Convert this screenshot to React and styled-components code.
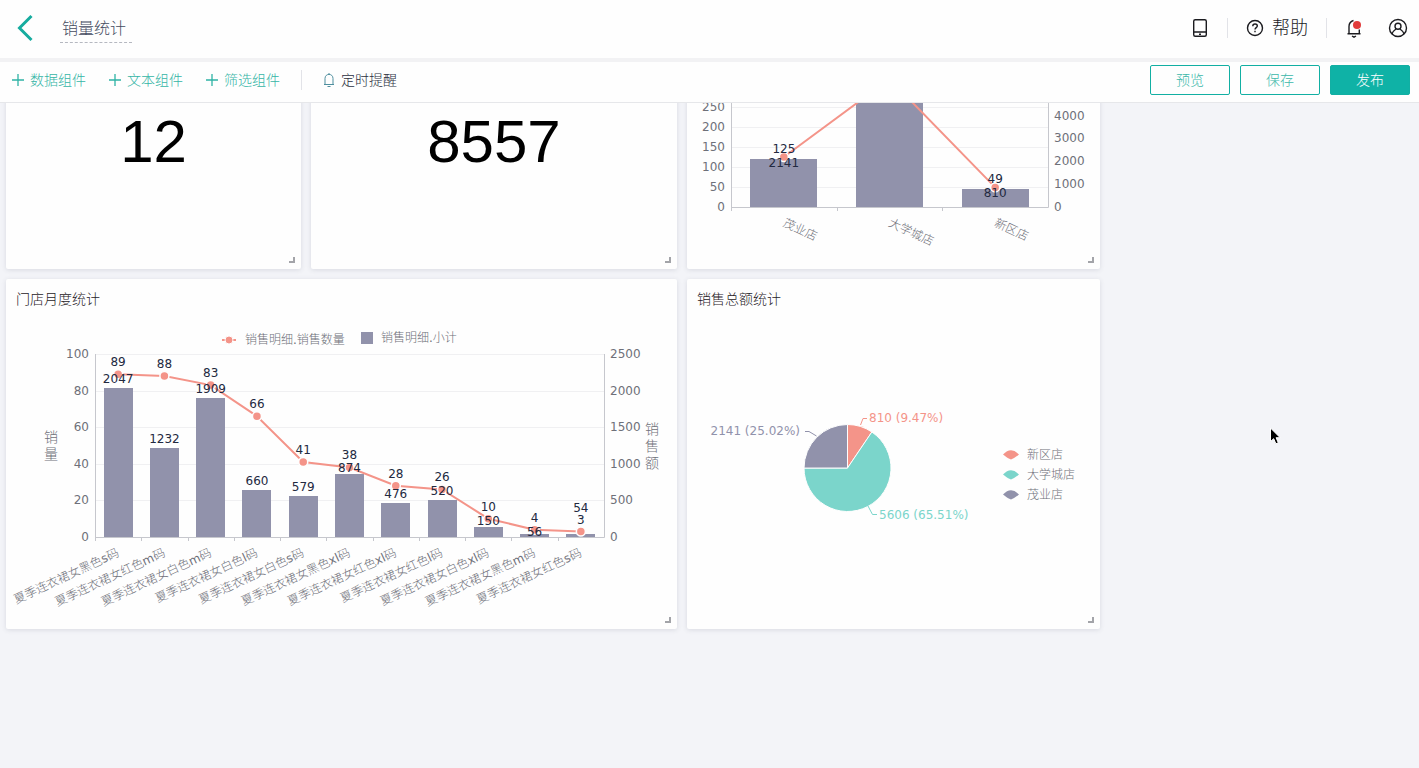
import React, { useLayoutEffect, useRef } from 'react';
import styled, { createGlobalStyle } from 'styled-components';

const GlobalStyle = createGlobalStyle`
  * {
    box-sizing: border-box;
  }

  body {
    margin: 0;
    background-color: #f3f4f8;
    font-family: 'Liberation Sans', 'Noto Sans CJK SC', sans-serif;
    font-weight: 300;
    color: #333c4c;
  }
`;

const Page = styled.div`
  position: relative;
  display: flex;
  flex-direction: column;
  height: 100vh;
  overflow: hidden;
`;

const Header = styled.header`
  display: flex;
  align-items: center;
  height: 58px;
  flex-shrink: 0;
  padding: 0 11px 2px 16px;
  background-color: #fefefe;
`;

const IconButton = styled.button`
  display: flex;
  align-items: center;
  gap: 8px;
  padding: 0;
  border: none;
  background: none;
  color: #1b1b1f;
  font-family: inherit;
  font-size: 18px;
  font-weight: 300;
  line-height: 24px;
  cursor: pointer;
`;

const TitleInput = styled.input`
  width: 72px;
  height: 30px;
  margin-left: 26px;
  padding: 0 2px 2px;
  border: none;
  border-bottom: 1px dashed #b5b8c0;
  background: none;
  color: #454b60;
  font-family: inherit;
  font-size: 16px;
  font-weight: 300;
  outline: none;
`;

const HeaderActions = styled.div`
  display: flex;
  align-items: center;
  gap: 18px;
  margin-left: auto;
`;

const AccountActions = styled.div`
  display: flex;
  align-items: center;
  gap: 25px;
`;

const Divider = styled.span`
  width: 1px;
  height: 20px;
  background-color: #e2e3e8;
`;

const Toolbar = styled.div`
  display: flex;
  align-items: center;
  height: 45px;
  flex-shrink: 0;
  padding: 0 9px 4px 12px;
  border-top: 4px solid #f2f2f4;
  border-bottom: 1px solid #e6e7ea;
  background-color: #fefefe;
`;

const ToolList = styled.div`
  display: flex;
  align-items: center;
  gap: ${props => props.$gap}px;
`;

const ToolButton = styled.button`
  display: flex;
  align-items: center;
  gap: 6px;
  padding: 0;
  border: none;
  background: none;
  color: ${props => props.$dark ? '#2b3040' : '#35b5a6'};
  font-family: inherit;
  font-size: 14px;
  font-weight: 300;
  line-height: 20px;
  cursor: pointer;
`;

const ToolbarActions = styled.div`
  display: flex;
  gap: 10px;
  margin-left: auto;
`;

const ActionButton = styled.button`
  width: 80px;
  height: 30px;
  padding: 0 0 2px;
  border: 1px solid #12afa3;
  border-radius: 2px;
  background-color: ${props => props.$primary ? '#0fb2a6' : '#fefefe'};
  color: ${props => props.$primary ? '#ffffff' : '#3cb8aa'};
  font-family: inherit;
  font-size: 14px;
  font-weight: 300;
  cursor: pointer;
`;

const Board = styled.main`
  flex: 1;
  min-height: 0;
  overflow-y: auto;
  scrollbar-width: none;
`;

const CardGrid = styled.div`
  display: grid;
  grid-template-columns: 295fr 366fr 413fr 309fr;
  grid-auto-rows: 350px;
  gap: 10px;
  padding: 7px 0 240px 6px;
`;

const Card = styled.section`
  position: relative;
  grid-column: ${props => props.$column};
  display: flex;
  flex-direction: column;
  min-width: 0;
  border-radius: 2px;
  background-color: #fefefe;
  box-shadow: 0 1px 5px rgba(60, 62, 90, 0.14);
`;

const CardTitle = styled.h2`
  height: 40px;
  margin: 0;
  padding: 0 10px;
  color: #1f2126;
  font-size: 14px;
  font-weight: 300;
  line-height: 40px;
`;

const ResizeHandle = styled.span`
  position: absolute;
  right: 6px;
  bottom: 6px;
  width: 6px;
  height: 6px;
  border-right: 2px solid #a3a4a9;
  border-bottom: 2px solid #a3a4a9;
`;

const BigNumber = styled.div`
  flex: 1;
  display: flex;
  align-items: center;
  justify-content: center;
  padding-top: 54px;
  color: #000000;
  font-size: 60px;
  font-weight: 400;
`;

const ChartSvg = styled.svg`
  display: block;
  width: 100%;
  height: 310px;
  overflow: hidden;
  font-family: 'DejaVu Sans', 'Noto Sans CJK SC', sans-serif;
  font-size: 12px;
  font-weight: 400;
`;

const AxisText = styled.text`
  fill: #6e7079;
`;

const ValueText = styled.text`
  fill: #22293f;
  text-anchor: middle;
`;

const Hanzi = styled.tspan`
  font-weight: 300;
`;

const PointerIcon = styled.svg`
  position: absolute;
  left: 1268px;
  top: 426px;
  pointer-events: none;
`;

const BAR = '#9192ab';
const LINE = '#f49489';
const TEAL = '#7bd5cb';

// shift moves a bar label clear of its neighbours
const monthly = [
  { name: '夏季连衣裙女黑色s码', count: 89, total: 2047 },
  { name: '夏季连衣裙女红色m码', count: 88, total: 1232 },
  { name: '夏季连衣裙女白色m码', count: 83, total: 1909 },
  { name: '夏季连衣裙女白色l码', count: 66, total: 660 },
  { name: '夏季连衣裙女白色s码', count: 41, total: 579 },
  { name: '夏季连衣裙女黑色xl码', count: 38, total: 874, shift: 3 },
  { name: '夏季连衣裙女红色xl码', count: 28, total: 476 },
  { name: '夏季连衣裙女红色l码', count: 26, total: 520 },
  { name: '夏季连衣裙女白色xl码', count: 10, total: 150, shift: 3 },
  { name: '夏季连衣裙女黑色m码', count: 4, total: 56, shift: 7 },
  { name: '夏季连衣裙女红色s码', count: 3, total: 54, shift: -17 },
];

const stores = [
  { name: '茂业店', count: 125, total: 2141 },
  { name: '大学城店', count: 320, total: 5606 },
  { name: '新区店', count: 49, total: 810 },
];

const range = (from, to, step) => {
  const values = [];
  for (let v = from; v <= to; v += step) values.push(v);
  return values;
};

// Chinese runs are set lighter than the latin ones
const MixedText = ({ text }) =>
  text.split(/([a-z.]+)/).filter(Boolean).map((part, i) => (
    /[a-z.]/.test(part) ? <tspan key={i}>{part}</tspan> : <Hanzi key={i}>{part}</Hanzi>
  ));

// Bars use the right axis, the line uses the left one
const ComboChart = ({
  data, viewWidth, plot, left, right, barWidth,
  totalGap = 4, countGap = 8, labelAngle, labelY, children,
}) => {
  const band = (plot.right - plot.left) / data.length;
  const height = plot.bottom - plot.top;
  const centre = i => plot.left + band * (i + 0.5);
  const leftY = v => plot.bottom - (v / left.max) * height;
  const rightY = v => plot.bottom - (v / right.max) * height;
  const barTop = v => Math.round(rightY(v)) + 1;

  return (
    <ChartSvg viewBox={`0 0 ${viewWidth} 310`}>
      {children}
      {range(left.step, left.max, left.step).map(v => (
        <line key={v} x1={plot.left} x2={plot.right} y1={Math.round(leftY(v)) + 0.5} y2={Math.round(leftY(v)) + 0.5} stroke="#f0f0f2" />
      ))}
      {range(0, left.max, left.step).map(v => (
        <AxisText key={v} x={plot.left - 6} y={leftY(v) + 4} textAnchor="end">{v}</AxisText>
      ))}
      {range(0, right.max, right.step).map(v => (
        <AxisText key={v} x={plot.right + 6} y={rightY(v) + 4}>{v}</AxisText>
      ))}
      {data.map((d, i) => (
        <rect
          key={d.name}
          x={Math.round(centre(i) - barWidth / 2)}
          y={barTop(d.total)}
          width={barWidth}
          height={plot.bottom - barTop(d.total)}
          fill={BAR}
        />
      ))}
      <path
        d={`M${plot.left + 0.5} ${plot.top}V${plot.bottom + 0.5}H${plot.right + 0.5}V${plot.top}`}
        fill="none"
        stroke="#c6c7cd"
      />
      {data.map((d, i) => (
        <line key={d.name} x1={Math.round(plot.left + band * i) + 0.5} x2={Math.round(plot.left + band * i) + 0.5} y1={plot.bottom} y2={plot.bottom + 4} stroke="#c6c7cd" />
      ))}
      <polyline
        points={data.map((d, i) => `${centre(i)},${leftY(d.count)}`).join(' ')}
        fill="none"
        stroke={LINE}
        strokeWidth="2"
      />
      {data.map((d, i) => (
        <circle key={d.name} cx={centre(i)} cy={leftY(d.count)} r="4.5" fill={LINE} stroke="#fefefe" strokeWidth="1.5" />
      ))}
      {data.map((d, i) => (
        <g key={d.name}>
          <ValueText x={centre(i)} y={rightY(d.total) - totalGap + (d.shift || 0)}>{d.total}</ValueText>
          <ValueText x={centre(i)} y={leftY(d.count) - countGap}>{d.count}</ValueText>
          <AxisText
            transform={`translate(${centre(i)} ${labelY}) rotate(${labelAngle})`}
            textAnchor={labelAngle < 0 ? 'end' : 'start'}
            dominantBaseline="central"
          >
            <MixedText text={d.name} />
          </AxisText>
        </g>
      ))}
    </ChartSvg>
  );
};

const AxisName = ({ x, y, text }) => (
  <g fontSize="14" fontWeight="300">
    {text.split('').map((char, i) => (
      <AxisText key={char} x={x} y={y + i * 17} textAnchor="middle">{char}</AxisText>
    ))}
  </g>
);

const slices = [
  { name: '新区店', value: 810, color: LINE },
  { name: '大学城店', value: 5606, color: TEAL },
  { name: '茂业店', value: 2141, color: BAR },
];

const PieChart = () => {
  const sum = slices.reduce((acc, s) => acc + s.value, 0);
  const cx = 160.5;
  const cy = 149;
  const r = 43.5;
  let angle = -Math.PI / 2;

  return (
    <ChartSvg viewBox="0 0 413 310">
      {slices.map(s => {
        const start = angle;
        angle += (s.value / sum) * Math.PI * 2;
        const large = angle - start > Math.PI ? 1 : 0;
        const from = `${cx + r * Math.cos(start)} ${cy + r * Math.sin(start)}`;
        const to = `${cx + r * Math.cos(angle)} ${cy + r * Math.sin(angle)}`;
        return (
          <path
            key={s.name}
            d={`M${cx} ${cy}L${from}A${r} ${r} 0 ${large} 1 ${to}Z`}
            fill={s.color}
            stroke="#fefefe"
            strokeWidth="1"
          />
        );
      })}
      <g fill="none">
        <path d="M173.500 106L176 99.500H180" stroke={LINE} />
        <path d="M181 187L185.500 195.500H190" stroke={TEAL} />
        <path d="M129.500 117L122 112.500H118" stroke={BAR} />
      </g>
      <text x="182" y="103" fill={LINE}>810 (9.47%)</text>
      <text x="192" y="200" fill={TEAL}>5606 (65.51%)</text>
      <text x="113" y="116" textAnchor="end" fill={BAR}>2141 (25.02%)</text>
      {slices.map((s, i) => (
        <g key={s.name} transform={`translate(316 ${136 + i * 20})`}>
          <path d="M0 -0.500Q8 -9 16 -0.500Q12 3 8 4.500Q4 3 0 -0.500Z" fill={s.color} />
          <AxisText x="24" y="4"><MixedText text={s.name} /></AxisText>
        </g>
      ))}
    </ChartSvg>
  );
};

const PlusIcon = () => (
  <svg width="12" height="12" viewBox="0 0 12 12" fill="none" stroke="#2fb3a5" strokeWidth="1.3">
    <path d="M6 0V12M0 6H12" />
  </svg>
);

const App = () => {
  const boardRef = useRef(null);

  useLayoutEffect(() => {
    boardRef.current.scrollTop = 191;
  }, []);

  return (
    <Page>
      <GlobalStyle />
      <Header>
        <IconButton aria-label="返回">
          <svg width="18" height="28" viewBox="0 0 18 28" fill="none" stroke="#16ac9f" strokeWidth="3">
            <path d="M15.500 2L3.500 14L15.500 26" />
          </svg>
        </IconButton>
        <TitleInput aria-label="报表名称" defaultValue="销量统计" />
        <HeaderActions>
          <IconButton aria-label="移动端">
            <svg width="18" height="20" viewBox="0 0 18 20" fill="none" stroke="currentColor" strokeWidth="1.4">
              <rect x="2.700" y="1.700" width="12.600" height="16.600" rx="1.500" />
              <path d="M2.700 14H15.300M8 16.200H10" />
            </svg>
          </IconButton>
          <Divider />
          <IconButton>
            <svg width="18" height="18" viewBox="0 0 18 18" fill="none" stroke="currentColor" strokeWidth="1.4">
              <circle cx="9" cy="9" r="7.500" />
              <path d="M6.800 7.200C6.800 4.300 11.300 4.400 11.300 7.100C11.300 8.700 9 8.700 9 10.600M9 11.800V13.300" />
            </svg>
            帮助
          </IconButton>
          <Divider />
          <AccountActions>
            <IconButton aria-label="通知">
              <svg width="18" height="20" viewBox="0 0 18 20" fill="none" stroke="currentColor" strokeWidth="1.4">
                <path d="M8.500 2.500C5.500 3.500 4 6 4 8.500V15.500M2.500 15.800H15.500M14.300 15.500V11.500M7 18L9 19.200L11 18" />
                <circle cx="12" cy="7" r="4" fill="#e23b3b" stroke="none" />
              </svg>
            </IconButton>
            <IconButton aria-label="账户">
              <svg width="20" height="20" viewBox="0 0 20 20" fill="none" stroke="currentColor" strokeWidth="1.4">
                <circle cx="10" cy="10" r="8.500" />
                <circle cx="10" cy="8.300" r="3" />
                <path d="M4 16C5 13 6.500 12 8 11M12 11C13.500 12 15 13 16 16" />
              </svg>
            </IconButton>
          </AccountActions>
        </HeaderActions>
      </Header>

      <Toolbar>
        <ToolList $gap={21}>
          <ToolList $gap={23}>
            <ToolButton><PlusIcon />数据组件</ToolButton>
            <ToolButton><PlusIcon />文本组件</ToolButton>
            <ToolButton><PlusIcon />筛选组件</ToolButton>
          </ToolList>
          <Divider />
          <ToolButton $dark>
            <svg width="12" height="16" viewBox="0 0 12 16" fill="none" stroke="#4f8f9f">
              <path d="M1 12.500H11M2 12.500V6.500C2 1 10 1 10 6.500V12.500M6 1V2.500M4.500 14.500H7.500" />
            </svg>
            定时提醒
          </ToolButton>
        </ToolList>
        <ToolbarActions>
          <ActionButton>预览</ActionButton>
          <ActionButton>保存</ActionButton>
          <ActionButton $primary>发布</ActionButton>
        </ToolbarActions>
      </Toolbar>

      <Board ref={boardRef}>
        <CardGrid>
          <Card $column="1">
            <CardTitle />
            <BigNumber>12</BigNumber>
            <ResizeHandle />
          </Card>
          <Card $column="2">
            <CardTitle />
            <BigNumber>8557</BigNumber>
            <ResizeHandle />
          </Card>
          <Card $column="3">
            <CardTitle />
            <ComboChart
              data={stores}
              viewWidth={413}
              plot={{ left: 44, right: 361, top: 88, bottom: 248 }}
              left={{ max: 400, step: 50 }}
              right={{ max: 7000, step: 1000 }}
              barWidth={67}
              totalGap={-9}
              countGap={4}
              labelAngle={25}
              labelY={263}
            />
            <ResizeHandle />
          </Card>
          <Card $column="1 / 3">
            <CardTitle>门店月度统计</CardTitle>
            <ComboChart
              data={monthly}
              viewWidth={671}
              plot={{ left: 89, right: 598, top: 35, bottom: 218 }}
              left={{ max: 100, step: 20 }}
              right={{ max: 2500, step: 500 }}
              barWidth={29}
              labelAngle={-25}
              labelY={233}
            >
              <path d="M216 21H230" stroke={LINE} strokeWidth="2" />
              <circle cx="223" cy="21" r="4" fill={LINE} stroke="#fefefe" />
              <AxisText x="239" y="25"><MixedText text="销售明细.销售数量" /></AxisText>
              <rect x="355" y="13" width="12" height="12" fill={BAR} />
              <AxisText x="375" y="23"><MixedText text="销售明细.小计" /></AxisText>
              <AxisName x={45} y={123} text="销量" />
              <AxisName x={646} y={115} text="销售额" />
            </ComboChart>
            <ResizeHandle />
          </Card>
          <Card $column="3">
            <CardTitle>销售总额统计</CardTitle>
            <PieChart />
            <ResizeHandle />
          </Card>
        </CardGrid>
      </Board>

      <PointerIcon width="14" height="20" viewBox="0 0 14 20">
        <path d="M2.500 2V15.500L5.700 12.700L7.900 17.800L10.300 16.700L8.100 11.700H12.200Z" fill="#000000" stroke="#ffffff" />
      </PointerIcon>
    </Page>
  );
};

export default App;
